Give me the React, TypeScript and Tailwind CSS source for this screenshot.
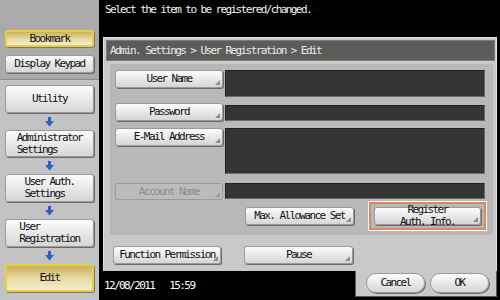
import type { ReactNode } from "react";

const MONO = "font-['DejaVu_Sans_Mono',monospace]";
const TXT = "text-[11px] tracking-[-1.6px] leading-[12px]";
const BTN = `relative flex items-center justify-center rounded-[3px] border border-[#9a9a9a] bg-linear-to-b from-[#fcfcfc] to-[#d6d6d6] shadow-[1px_1px_0_#6a6a6a] ${TXT} text-[#101010] text-center`;
const GOLD = `relative flex items-center justify-center rounded-[3px] border-2 border-[#e9cf3c] bg-linear-to-b from-[#c9b15c] via-[#e6d9a0] to-[#f4edd0] shadow-[1px_1px_0_#7a7a6a] ${TXT} text-[#101010]`;

function Corner({ color = "#8c8c8c" }: { color?: string }) {
  return (
    <span
      className="absolute right-[2px] bottom-[2px] w-0 h-0 border-l-[5px] border-l-transparent border-b-[5px]"
      style={{ borderBottomColor: color }}
    />
  );
}

function Arrow() {
  return (
    <div className="h-[17px] flex items-center justify-center">
      <svg width="9" height="10" viewBox="0 0 9 10">
        <rect x="3" y="0" width="3" height="5" fill="#2b5fc4" />
        <polygon points="0,4 9,4 4.5,9.5" fill="#2b5fc4" />
      </svg>
    </div>
  );
}

function FormBtn({ children, className = "", disabled }: { children: ReactNode; className?: string; disabled?: boolean }) {
  if (disabled) {
    return (
      <div className={`relative flex items-center justify-center rounded-[3px] border border-[#9a9a9a] bg-[#bcbcbc] ${TXT} text-[#8c8c8c] ${className}`}>
        {children}
        <Corner color="#9c9c9c" />
      </div>
    );
  }
  return (
    <div className={`${BTN} ${className}`}>
      {children}
      <Corner />
    </div>
  );
}

function Field({ h }: { h: string }) {
  return <div className={`w-[260px] ${h} bg-[#343634] border border-t-[#202020] border-l-[#202020] border-r-[#6a6a6a] border-b-[#6a6a6a]`} />;
}

function TwoLine({ a, b }: { a: string; b: string }) {
  return (
    <div className="flex flex-col items-start leading-[12px]">
      <span>{a}</span>
      <span>{b}</span>
    </div>
  );
}

export default function App() {
  return (
    <div className={`w-[500px] h-[300px] flex bg-black overflow-hidden ${MONO}`}>
      {/* left column */}
      <div className="w-[99px] flex flex-col bg-[#c3c3c3]">
        <div className="h-[80px] bg-[#aaaaaa] border-b border-[#888888] px-[5px] pt-[30px] flex flex-col">
          <div className={`${GOLD} h-[17px]`}>Bookmark</div>
          <div className={`${BTN} h-[18px] mt-[8px]`}>Display Keypad</div>
        </div>
        <div className="px-[5px] pt-[5px] flex flex-col">
          <div className={`${BTN} h-[28px]`}>Utility</div>
          <Arrow />
          <div className={`${BTN} h-[27px]`}>
            <TwoLine a="Administrator" b="Settings" />
          </div>
          <Arrow />
          <div className={`${BTN} h-[28px]`}>
            <TwoLine a="User Auth." b="Settings" />
          </div>
          <Arrow />
          <div className={`${BTN} h-[28px]`}>
            <TwoLine a="User" b="Registration" />
          </div>
          <Arrow />
          <div className={`${GOLD} h-[28px]`}>Edit</div>
        </div>
      </div>

      {/* right column */}
      <div className="flex-1 flex flex-col">
        <div className={`h-[37px] pl-[6px] pt-[4px] ${TXT} text-[#f2f2f2]`}>
          Select the item to be registered/changed.
        </div>

        <div className="ml-[4px] mr-[3px] h-[234px] bg-[#c9c9c9] border-l border-t border-r border-[#e2e2e2] pt-[2px] pl-[2px] pr-[1px] flex flex-col">
          <div className={`h-[21px] bg-[#5b5d5b] border border-[#7a7c7a] pl-[3px] flex items-center ${TXT} text-[#ececec]`}>
            Admin. Settings &gt; User Registration &gt; Edit
          </div>

          <div className="mt-[3px] ml-[4px] mr-[2px] h-[171px] bg-[#b8b8b8] rounded-[2px] pl-[5px] pt-[6px] flex flex-col">
            <div className="flex items-start gap-[2px]">
              <FormBtn className="w-[108px] h-[18px]">User Name</FormBtn>
              <Field h="h-[27px]" />
            </div>
            <div className="mt-[8px] flex items-start gap-[2px]">
              <FormBtn className="w-[108px] h-[18px] -mt-[2px]">Password</FormBtn>
              <Field h="h-[16px]" />
            </div>
            <div className="mt-[7px] flex items-start gap-[2px]">
              <FormBtn className="w-[108px] h-[18px]">E-Mail Address</FormBtn>
              <Field h="h-[46px]" />
            </div>
            <div className="mt-[9px] flex items-start gap-[2px]">
              <FormBtn disabled className="w-[108px] h-[17px]">Account Name</FormBtn>
              <Field h="h-[16px]" />
            </div>
            <div className="mt-[1px] flex items-center">
              <FormBtn className="ml-[130px] w-[109px] h-[18px]">Max. Allowance Set</FormBtn>
              <div className="ml-[14px] border border-white">
                <div className="border-2 border-[#e8825a] p-[3px]">
                  <div className={`${BTN} w-[107px] h-[18px] flex-col text-[8px] tracking-[-0.2px] leading-[7px]`}>
                    <span>Register</span>
                    <span>Auth. Info.</span>
                    <Corner />
                  </div>
                </div>
              </div>
            </div>
          </div>

          <div className="mt-[11px] ml-[7px] flex items-center">
            <FormBtn className="w-[108px] h-[18px]">Function Permission</FormBtn>
            <FormBtn className="ml-[23px] w-[109px] h-[18px]">Pause</FormBtn>
          </div>
        </div>

        <div className="flex flex-1">
          <div className={`flex-1 pl-[5px] pt-[9px] ${TXT} text-white whitespace-pre`}>
            {"12/08/2011   15:59"}
          </div>
          <div className="w-[142px] h-[26px] mr-[3px] bg-[#c9c9c9] border-l border-b border-r border-[#5a5a5a] pl-[10px] pt-[2px] flex gap-[5px]">
            <div className={`${BTN} w-[59px] h-[20px] rounded-full`}>Cancel</div>
            <div className={`${BTN} w-[59px] h-[20px] rounded-full`}>OK</div>
          </div>
        </div>
      </div>
    </div>
  );
}
